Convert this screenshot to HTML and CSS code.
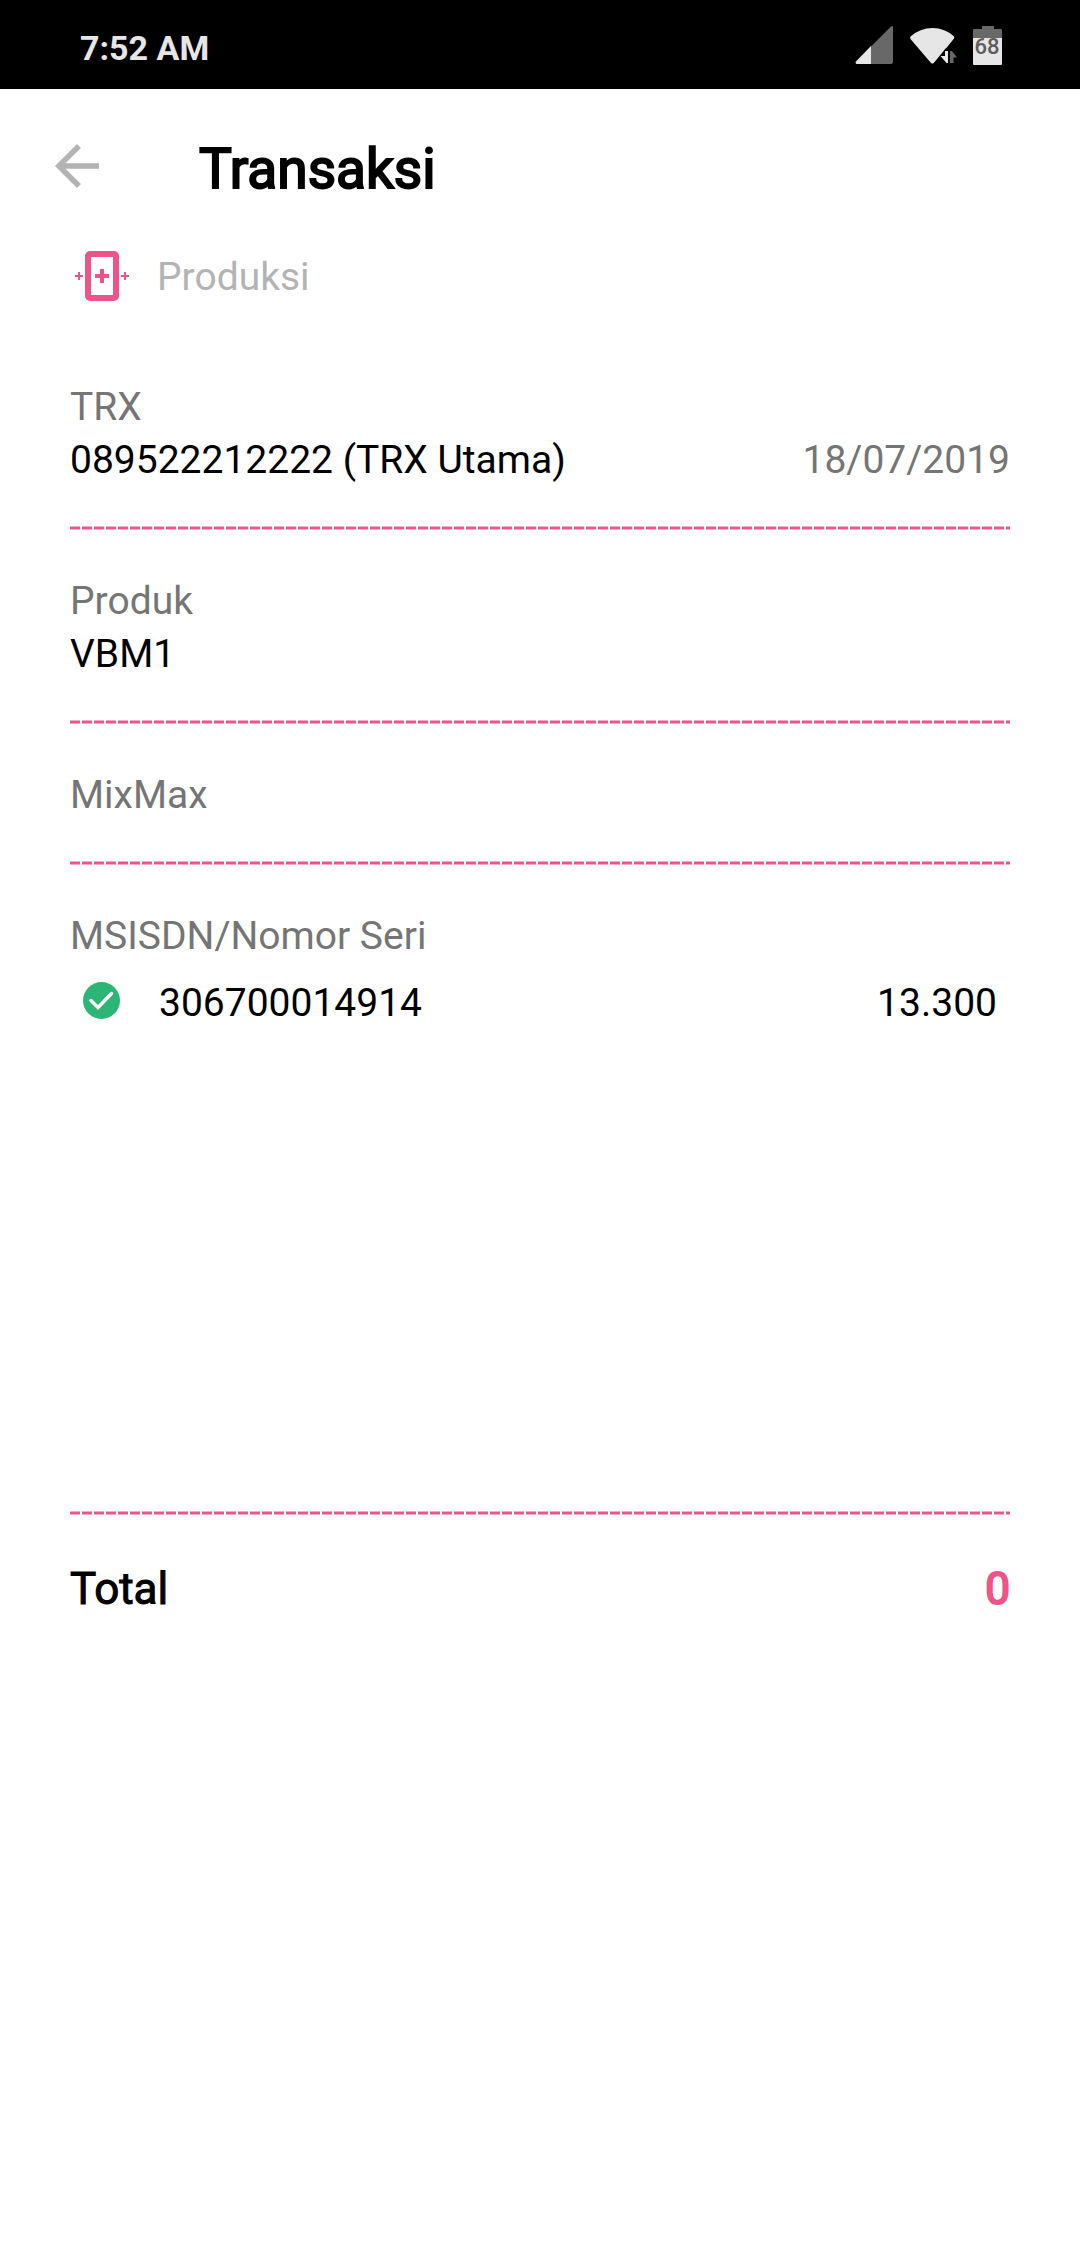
FILE: index.html
```html
<!DOCTYPE html>
<html lang="id">
<head>
<meta charset="utf-8">
<meta name="viewport" content="width=device-width, initial-scale=1">
<title>Transaksi</title>
<link rel="stylesheet" href="styles.css">
</head>
<body>
<div class="status">
  <time class="status-time">7:52 AM</time>
  <svg class="status-icons" width="148" height="42" viewBox="0 0 148 42" aria-hidden="true">
    <path fill="#686868" d="M38 1.500V36q0 2-2 2H2q-2-.5-1-2.500L35.500 1Q38-1 38 1.500z"/>
    <path fill="#e6e6e6" d="M16 20v18H2q-2-.5-1-2.500z"/>
    <path fill="#e6e6e6" d="M55.500 10.500Q65 2 77.500 2T99 10.500q.5 1 0 2L89 25v4l-10 8q-1.500 1-3 0L55.500 13q-.8-1.500 0-2.500z"/>
    <path fill="#000" d="M91 22L78 38h25V22z"/>
    <path fill="#e6e6e6" d="M93 25h-3v5h-4.500l6 7h1.500z"/>
    <path fill="#686868" d="M95 25h2l5 6.500h-3.500V37H95z"/>
    <path fill="#686868" d="M119 3q-1 0-1 1v9h29V4q0-1-1-1h-7V0h-12v3z"/>
    <path fill="#e6e6e6" d="M118 12h29v26q0 1-1 1h-27q-1 0-1-1z"/>
    <text class="battery-level" x="132" y="28" text-anchor="middle">68</text>
  </svg>
</div>
<header class="header">
  <button class="back" type="button" aria-label="Kembali">
    <svg width="66" height="66" viewBox="0 0 24 24" aria-hidden="true"><path fill="#b3b3b3" d="M20 11H7.830l5.590-5.590L12 4l-8 8 8 8 1.410-1.410L7.830 13H20v-2z"/></svg>
  </button>
  <h1 class="title">Transaksi</h1>
</header>
<main class="content">
  <div class="category">
    <svg class="category-icon" width="54" height="50" viewBox="0 0 54 50" aria-hidden="true">
      <rect x="13" y="3" width="28" height="44" rx="2" fill="none" stroke="#ef5389" stroke-width="6"/>
      <path fill="#ef5389" d="M25 18h4v5h5v4h-5v5h-4v-5h-5v-4h5zM3 21h2v3h3v2H5v3H3v-3H0v-2h3zM49 21h2v3h3v2h-3v3h-2v-3h-3v-2h3z"/>
    </svg>
    <span>Produksi</span>
  </div>
  <section class="field">
    <h2 class="label">TRX</h2>
    <div class="row"><span>089522212222 (TRX Utama)</span><time class="label" datetime="2019-07-18">18/07/2019</time></div>
  </section>
  <section class="field">
    <h2 class="label">Produk</h2>
    <div class="row"><span>VBM1</span></div>
  </section>
  <section class="field">
    <h2 class="label">MixMax</h2>
  </section>
  <section class="field">
    <h2 class="label">MSISDN/Nomor Seri</h2>
    <ul class="list">
      <li class="item">
        <svg class="check" width="37" height="37" viewBox="0 0 37 37" aria-hidden="true"><circle cx="18.500" cy="18.500" r="18.500" fill="#2cb574"/><path d="M8 18.500l7 7L28.500 11.500" fill="none" stroke="#fff" stroke-width="3.500" stroke-linecap="round"/></svg>
        <span>306700014914</span>
        <span class="amount">13.300</span>
      </li>
    </ul>
  </section>
  <div class="total"><span>Total</span><span class="total-value">0</span></div>
</main>
</body>
</html>
```

FILE: styles.css
```css
* {
  box-sizing: border-box;
}

body {
  margin: 0;
  background: #fff;
  color: #000;
  font: 39px/53px Roboto, sans-serif;
}

h1,
h2,
ul {
  margin: 0;
  padding: 0;
  font: inherit;
  list-style: none;
}

svg {
  display: block;
  flex: none;
}

.status {
  display: flex;
  justify-content: space-between;
  padding: 26px 77px 19px 80px;
  background: #000;
}

.status-time {
  color: #e6e6e6;
  font-size: 34px;
  font-weight: 700;
  line-height: 44px;
}

.battery-level {
  fill: #5c5c5c;
  font-size: 22px;
  font-weight: 500;
}

.header {
  display: flex;
  align-items: flex-start;
  gap: 89px;
  padding: 44px 44px 0;
}

.back {
  padding: 0;
  border: 0;
  background: none;
}

.title {
  font-size: 55px;
  line-height: 72px;
  -webkit-text-stroke: 2px currentColor;
}

.content {
  padding: 46px 70px 44px;
}

.category {
  display: flex;
  align-items: flex-start;
  gap: 28px;
  padding: 0 5px 33px;
  color: #b3b3b3;
}

.field {
  padding-top: 44px;
}

/* dashed rule with softened top and bottom edges */
.field::after {
  content: "";
  display: block;
  height: 4px;
  margin-top: 39px;
  background:
    linear-gradient(#ffffff80 0 1px, transparent 1px 3px, #ffffff80 3px),
    repeating-linear-gradient(to right, #ef5389 0 10px, #fff 10px 12px);
}

.label {
  color: #757575;
}

.row {
  display: flex;
  justify-content: space-between;
}

.field + .field {
  padding-top: 45px;
}

.list {
  min-height: 509px;
  padding-top: 14px;
}

.item {
  display: flex;
  align-items: flex-start;
  padding: 0 13px;
}

.check {
  margin: 5px 39px 0 0;
}

.amount {
  margin-left: auto;
}

.total {
  display: flex;
  justify-content: space-between;
  padding-top: 44px;
  font-size: 44px;
  line-height: 60px;
  -webkit-text-stroke: 1px currentColor;
}

.total-value {
  color: #ef5389;
  -webkit-text-stroke-width: 2px;
}
```
